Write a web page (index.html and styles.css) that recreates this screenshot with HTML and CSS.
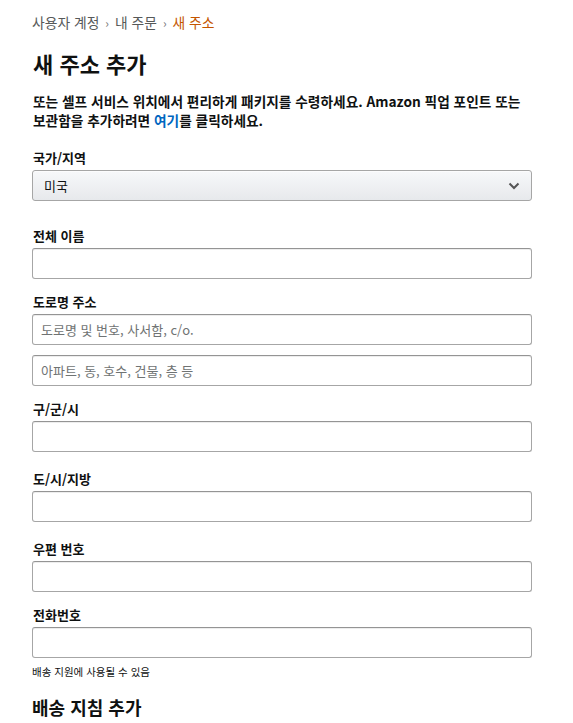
FILE: index.html
```html
<!DOCTYPE html>
<html lang="ko">
<head>
<meta charset="utf-8">
<link rel="stylesheet" href="styles.css">
</head>
<body>
<div class="page">
  <nav class="crumbs">
    <a href="#" class="crumb">사용자 계정</a><span class="sep">›</span><a href="#" class="crumb">내 주문</a><span class="sep">›</span><span class="crumb current">새 주소</span>
  </nav>
  <h1 class="title">새 주소 추가</h1>
  <p class="intro">또는 셀프 서비스 위치에서 편리하게 패키지를 수령하세요. Amazon 픽업 포인트 또는 보관함을 추가하려면 <a href="#" class="link">여기</a>를 클릭하세요.</p>

  <div class="field first">
    <label class="label">국가/지역</label>
    <div class="select">
      <span class="select-text">미국</span>
      <svg class="chev" width="12" height="8" viewBox="0 0 12 8"><path d="M1.5 1.5 L6 6 L10.5 1.5" fill="none" stroke="#555" stroke-width="2"/></svg>
    </div>
  </div>

  <div class="field gap-lg">
    <label class="label">전체 이름</label>
    <input class="input" type="text">
  </div>

  <div class="field">
    <label class="label">도로명 주소</label>
    <input class="input" type="text" placeholder="도로명 및 번호, 사서함, c/o.">
    <input class="input second" type="text" placeholder="아파트, 동, 호수, 건물, 층 등">
  </div>

  <div class="field">
    <label class="label">구/군/시</label>
    <input class="input" type="text">
  </div>

  <div class="field gap-md">
    <label class="label">도/시/지방</label>
    <input class="input" type="text">
  </div>

  <div class="field gap-md">
    <label class="label">우편 번호</label>
    <input class="input" type="text">
  </div>

  <div class="field">
    <label class="label">전화번호</label>
    <input class="input" type="text">
    <div class="hint">배송 지원에 사용될 수 있음</div>
  </div>

  <h2 class="subtitle">배송 지침 추가</h2>
</div>
</body>
</html>
```

FILE: styles.css
```css
* { box-sizing: border-box; }
html, body { margin: 0; padding: 0; background: #fff; }
body {
  font-family: "Noto Sans CJK KR", "Noto Sans", "Liberation Sans", sans-serif;
  color: #0f1111;
}
.page {
  width: 500px;
  margin-left: 32px;
  padding-top: 13px;
}
.crumbs {
  font-size: 13.8px;
  line-height: 19px;
  color: #565959;
}
.crumb { color: #565959; text-decoration: none; }
.crumb.current { color: #c45500; }
.sep { margin: 0 6px; color: #767676; font-size: 12px; }
.title {
  margin: 16px 0 0 1px;
  font-size: 22px;
  line-height: 30px;
  font-weight: 700;
}
.intro {
  margin: 14px 0 0 1px;
  font-size: 13.7px;
  line-height: 19px;
  font-weight: 700;
  word-break: keep-all;
}
.link { color: #0066c0; text-decoration: none; }
.field {
  margin-top: 13px;
  display: flex;
  flex-direction: column;
}
.field.first { margin-top: 18px; }
.gap-lg { margin-top: 25px; }
.gap-md { margin-top: 17px; }
.label {
  display: block;
  margin-left: 1px;
  margin-bottom: 3px;
  font-size: 13px;
  line-height: 19px;
  font-weight: 700;
}
.select {
  height: 31px;
  border: 1px solid #a6a6a6;
  border-radius: 3px;
  background: linear-gradient(#f7f8fa, #e7e9ec);
  display: flex;
  align-items: center;
  justify-content: space-between;
  padding: 0 11px 0 11px;
  box-shadow: 0 1px 0 rgba(255,255,255,.6) inset;
}
.select-text { font-size: 13px; color: #0f1111; }
.chev { display: block; }
.input {
  height: 31px;
  width: 100%;
  border: 1px solid #a6a6a6;
  border-top-color: #949494;
  border-radius: 3px;
  padding: 0 8px;
  font-family: inherit;
  font-size: 13px;
  color: #0f1111;
  background: #fff;
  box-shadow: 0 1px 0 rgba(0,0,0,.07) inset;
  outline: none;
}
.input::placeholder { color: #6f7373; }
.input.second { margin-top: 10px; }
.hint {
  margin-top: 5px;
  font-size: 10.5px;
  line-height: 17px;
  color: #0f1111;
}
.subtitle {
  margin: 14px 0 0 0;
  font-size: 18px;
  line-height: 26px;
  font-weight: 700;
}
```
